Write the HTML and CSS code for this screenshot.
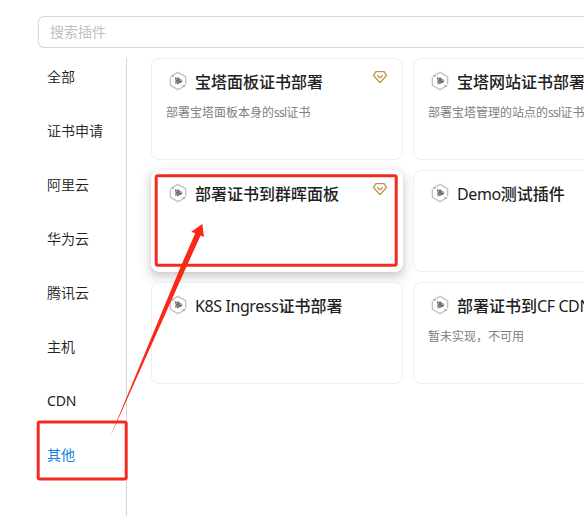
FILE: index.html
```html
<!DOCTYPE html>
<html lang="zh-CN">
<head>
<meta charset="utf-8">
<title>插件</title>
<link rel="stylesheet" href="styles.css">
</head>
<body>
<svg class="defs" width="0" height="0">
  <symbol id="plugin" viewBox="0 0 20 20">
    <path d="M4.2 4.6 10 1.4l7.6 4.2v8.2M15.8 15.4 10 18.6l-7.6-4.2V6.2" fill="none" stroke="#c4c4c4" stroke-width="1.4"/>
    <path d="M3 4.9h2.6M14.4 15.1H17" stroke="#b4b4b4" stroke-width="2"/>
    <path d="M7 6l2 1 1-.8 1.5.7v1.4l1.8-.3v1.2l1.6.8-1.6 1.1v1.2l-2-.3-1.5 1.6-1-1-1.8.7.7-2-.9-.9 1.1-1-1.1-1.8z" fill="#747474"/>
    <path d="M12 9.2l1.3.5M8 8l1.2.5M8 11.6l1.3-.4" stroke="#ccc" stroke-width=".6"/>
  </symbol>
  <symbol id="vip" viewBox="0 0 16 16">
    <path d="M3.9 2.6h8.2l2.4 3.9L8 13.6 1.5 6.5z" fill="none" stroke="#c0924e" stroke-width="1.4" stroke-linejoin="round"/>
    <path d="M5.2 6.2 8 8.8l2.8-2.6" fill="none" stroke="#c0924e" stroke-width="1.3"/>
  </symbol>
</svg>
<div class="page">
  <div class="search">搜索插件</div>
  <div class="body">
    <nav class="tabs">
      <div class="tab">全部</div>
      <div class="tab">证书申请</div>
      <div class="tab">阿里云</div>
      <div class="tab">华为云</div>
      <div class="tab">腾讯云</div>
      <div class="tab">主机</div>
      <div class="tab latin">CDN</div>
      <div class="tab active">其他</div>
    </nav>
    <main class="cards">
      <section class="card">
        <div class="head"><svg class="icon"><use href="#plugin"/></svg><h3>宝塔面板证书部署</h3><svg class="vip"><use href="#vip"/></svg></div>
        <p>部署宝塔面板本身的<span class="tight">ssl</span>证书</p>
      </section>
      <section class="card">
        <div class="head"><svg class="icon"><use href="#plugin"/></svg><h3>宝塔网站证书部署</h3></div>
        <p>部署宝塔管理的站点的<span class="tight">ssl</span>证书</p>
      </section>
      <section class="card raised">
        <div class="head"><svg class="icon"><use href="#plugin"/></svg><h3>部署证书到群晖面板</h3><svg class="vip"><use href="#vip"/></svg></div>
      </section>
      <section class="card">
        <div class="head"><svg class="icon"><use href="#plugin"/></svg><h3><span class="latin">Demo</span>测试插件</h3></div>
      </section>
      <section class="card">
        <div class="head"><svg class="icon"><use href="#plugin"/></svg><h3><span class="latin">K8S Ingress</span>证书部署</h3></div>
      </section>
      <section class="card">
        <div class="head"><svg class="icon"><use href="#plugin"/></svg><h3>部署证书到<span class="latin">CF CDN</span></h3></div>
        <p>暂未实现，不可用</p>
      </section>
    </main>
  </div>
</div>
<svg class="marks" viewBox="0 0 584 516">
  <rect x="156.2" y="175.8" width="240" height="89.5" rx="1.5"/>
  <rect x="38.2" y="422" width="88" height="57" rx="1.5"/>
  <path class="arrow" d="M109.5 438.5 163.6 308 181.4 265 195.2 233.2 191.3 231.8 202.3 224 204 237 200.6 235.6 187.2 265 168 308z"/>
</svg>
</body>
</html>
```
FILE: styles.css
```css
* { box-sizing: border-box; }
body {
  margin: 0;
  width: 584px;
  height: 516px;
  overflow: hidden;
  position: relative;
  background: #fff;
  color: #202020;
  font: 14px/22px "Noto Sans", "Noto Sans CJK SC", sans-serif;
}
.defs { display: block; }
.page { width: 584px; height: 516px; overflow: hidden; padding: 16px 0 0 38px; }
.search {
  height: 32px;
  padding: 0 11px;
  border: 1px solid #d6d6d6;
  border-right: 0;
  border-radius: 6px 0 0 6px;
  color: #bfbfbf;
  line-height: 30px;
}
.body { display: flex; margin-top: 10px; }
.tabs {
  flex: none;
  width: 89px;
  height: 458px;
  padding: 8px 0 0 9px;
  border-right: 1px solid #d4d4d4;
  display: flex;
  flex-direction: column;
  gap: 32px;
}
.tab { height: 22px; white-space: nowrap; font-weight: 350; }
.tab.latin { font-weight: 400; letter-spacing: -.2px; }
.tab.active { color: #1682de; font-weight: 400; }
.cards {
  display: grid;
  grid-template-columns: 252px 252px;
  grid-auto-rows: 102px;
  align-content: start;
  gap: 10px;
  margin-left: 24px;
}
.card {
  border: 1px solid #eee;
  border-radius: 8px;
  background: #fff;
  padding: 12px 14px;
}
.raised {
  border-color: #fff;
  box-shadow: 0 1px 2px -2px rgba(0,0,0,.16), 0 3px 6px rgba(0,0,0,.12), 0 5px 12px 4px rgba(0,0,0,.09);
}
.head { display: flex; height: 24px; }
.icon { width: 20px; height: 20px; margin: 0 7px 0 2px; flex: none; }
h3 { margin: -1px 0 0; font-size: 16px; line-height: 24px; font-weight: 500; white-space: nowrap; }
h3 .latin { font-weight: 400; letter-spacing: -.4px; }
.vip { width: 16px; height: 16px; margin: -2px 0 0 auto; flex: none; }
p { margin: 8px 0 0; font-size: 12px; line-height: 20px; color: #808080; white-space: nowrap; }
.tight { letter-spacing: -.7px; }
.marks { position: absolute; left: 0; top: 0; width: 584px; height: 516px; }
.marks rect { fill: none; stroke: #f42b20; stroke-width: 3; }
.arrow { fill: #f92819; }
```
